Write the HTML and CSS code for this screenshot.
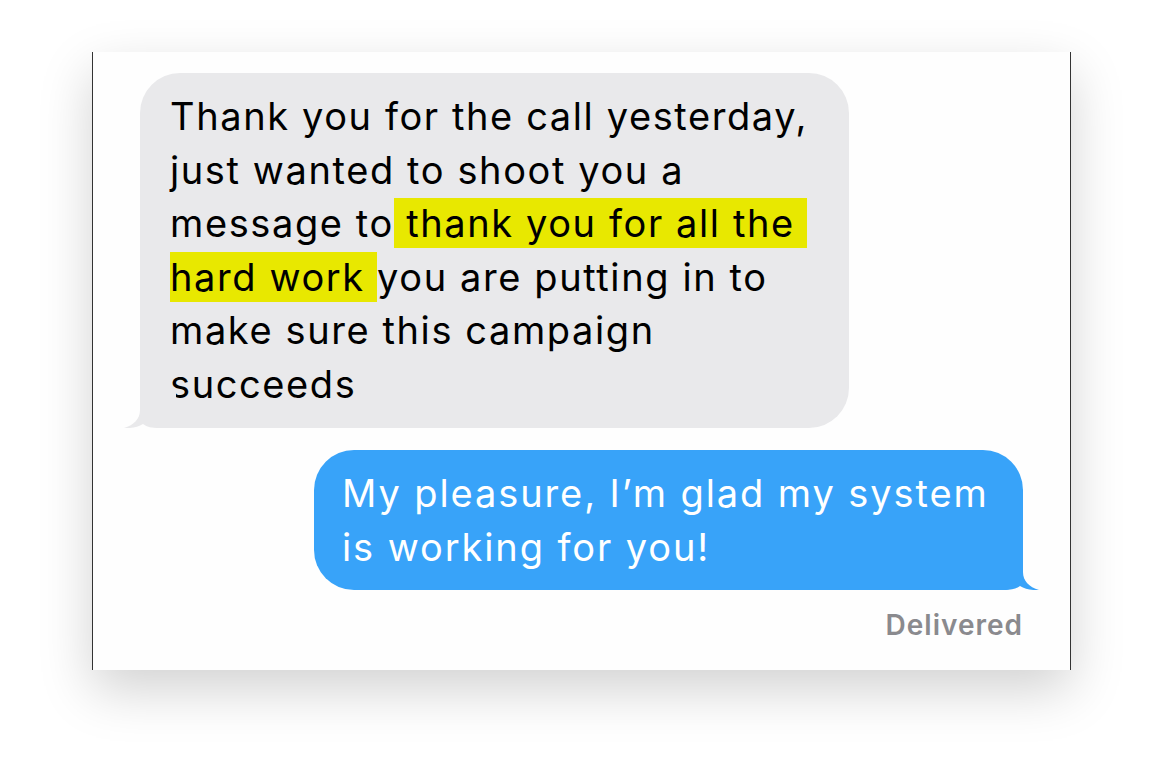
FILE: index.html
```html
<!DOCTYPE html>
<html>
    <head>
        <title>Mensagens</title>
        <meta charset="UTF-8">
        <link rel="stylesheet" href="styles.css">
    </head>
    <body>
        <div class="cartao">
            <!-- mensagem recebida -->
            <div class="linha recebida">
                <div class="balao cinza">
                    Thank you for the call yesterday,<br>
                    just wanted to shoot you a<br>
                    message to<span class="marca">&nbsp;thank you for all the&nbsp;</span><br>
                    <span class="marca">hard work&nbsp;</span>you are putting in to<br>
                    make sure this campaign<br>
                    succeeds
                    <svg class="cauda" width="52" height="40" viewBox="0 0 52 40">
                        <path d="M0,0 H36 V22 C36,31 42,37 52,40 C44,40.5 38,39 33,36 C29,39 24,40 18,40 H0 Z" fill="#e9e9eb"/>
                    </svg>
                </div>
            </div>
            <!-- mensagem enviada -->
            <div class="linha enviada">
                <div class="balao azul">
                    My pleasure, I’m glad my system<br>
                    is working for you!
                    <svg class="cauda" width="52" height="40" viewBox="0 0 52 40">
                        <path d="M0,0 H36 V22 C36,31 42,37 52,40 C44,40.5 38,39 33,36 C29,39 24,40 18,40 H0 Z" fill="#38a3f9"/>
                    </svg>
                </div>
            </div>
            <div class="status">Delivered</div>
        </div>
    </body>
</html>
```

FILE: styles.css
```css
* {
    margin: 0;
    padding: 0;
    box-sizing: border-box;
    font-family: Inter, "Noto Sans", sans-serif;
}
html, body {
    height: 100%;
}
body {
    background-color: #ffffff;
    padding-top: 52px;
    padding-left: 92px;
}
.cartao {
    width: 979px;
    height: 618px;
    background-color: #fefefe;
    border-left: 1.5px solid #333;
    border-right: 1.5px solid #333;
    box-shadow: 0 20px 50px rgba(0, 0, 0, 0.18);
    padding: 21px 47px 0 47px;
}
.linha {
    display: flex;
}
.enviada {
    justify-content: flex-end;
    margin-top: 22px;
}
.balao {
    position: relative;
    width: 709px;
    font-size: 38px;
    letter-spacing: 1.6px;
    line-height: 53.5px;
    border-radius: 40px;
}
.cinza {
    background-color: #e9e9eb;
    color: #000;
    padding: 17px 30px 17px 30px;
    border-bottom-left-radius: 20px;
}
.azul {
    background-color: #38a3f9;
    color: #fff;
    letter-spacing: 1.9px;
    padding: 17px 28px 16px 28px;
    border-bottom-right-radius: 20px;
}
.cauda {
    position: absolute;
    bottom: 0;
}
.azul .cauda {
    right: -16px;
}
.cinza .cauda {
    left: -16px;
    transform: scaleX(-1);
}
.marca {
    background-color: #e8e800;
    padding: 2px 0;
}
.status {
    text-align: right;
    margin-top: 18px;
    font-size: 28px;
    letter-spacing: 1px;
    font-weight: 600;
    color: #8a8a8e;
}
```
